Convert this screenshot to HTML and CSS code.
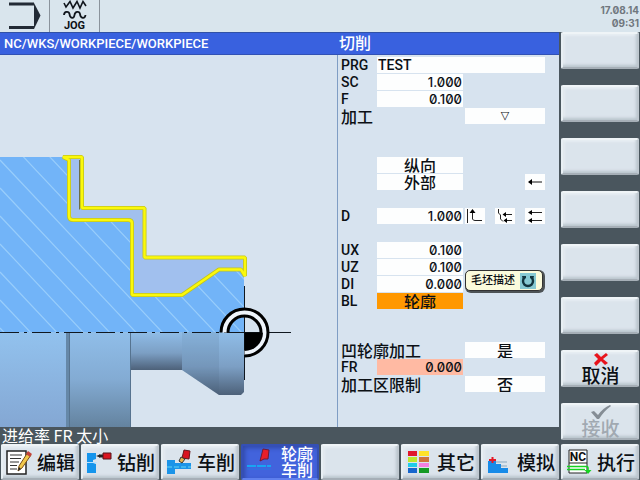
FILE: index.html
```html
<!DOCTYPE html>
<html lang="zh-CN">
<head>
<meta charset="utf-8">
<meta name="viewport" content="width=device-width, initial-scale=1">
<title>切削</title>
<link rel="stylesheet" href="styles.css">
</head>
<body>
<div class="hmi">
  <header class="top">
    <div class="mode">
      <svg width="34" height="32" viewBox="0 0 34 32" aria-hidden="true"><path d="M2 4H27M2 27.500H27" fill="none" stroke="#222a35" stroke-width="3"/><path d="M27 3L33.500 15.500L27 29Z" fill="#222a35"/></svg>
    </div>
    <div class="mode mode-jog">
      <svg width="24" height="20" viewBox="0 0 24 20" aria-hidden="true"><path d="M1 3L3 7L7 1.500L10 8L14 1.500L17 8L20 1.500L23 6" fill="none" stroke="#10151c" stroke-width="1.600"/><path d="M1 15C1 11 6 11 6.500 14C7 19 11 19 11.500 15C12 11 16.500 11 17 14C17.500 19 22 19 22.500 15" fill="none" stroke="#10151c" stroke-width="1.800"/></svg>
      <span>JOG</span>
    </div>
    <time class="clock" datetime="2014-08-17T09:31">17.08.14<br>09:31</time>
  </header>

  <div class="title path">NC/WKS/WORKPIECE/WORKPIECE</div>
  <h1 class="title">切削</h1>

  <main class="view">
    <svg class="drawing" viewBox="0 55 337 372" preserveAspectRatio="xMinYMin meet" role="img" aria-label="轮廓">
      <defs>
        <linearGradient id="g1" x2="0" y2="1"><stop offset="0" stop-color="#92c2ee"/><stop offset="1" stop-color="#84a7d3"/></linearGradient>
        <linearGradient id="g2" x2="0" y2="1"><stop offset="0" stop-color="#90bee9"/><stop offset=".5" stop-color="#83abd3"/><stop offset="1" stop-color="#64839f"/></linearGradient>
        <linearGradient id="g3" x2="0" y2="1"><stop offset="0" stop-color="#8fbde8"/><stop offset=".55" stop-color="#7c9fc4"/><stop offset="1" stop-color="#4d6179"/></linearGradient>
        <clipPath id="body"><path d="M0 157H66L69 160V217L72 220H129L132 223V295H182L219 270H241L244 276V332H0Z"/></clipPath>
      </defs>
      <path d="M0 157H66L69 160V217L72 220H129L132 223V295H182L219 270H241L244 276V332H0Z" fill="#72b4f8"/>
      <path clip-path="url(#body)" fill="none" stroke="#98cdfb" stroke-width="1.200" d="M0 -64L260 212M0 -36L260 240M0 -8L260 268M0 20L260 296M0 48L260 324M0 76L260 352M0 104L260 380M0 132L260 408M0 160L260 436M0 188L260 464M0 216L260 492M0 244L260 520M0 272L260 548M0 300L260 576M0 328L260 604"/>
      <g stroke-linejoin="bevel">
        <path d="M63 157H82V208H144.500V257.500H245V276L241 269.500H219L182 295H132V223Q132 220 128 220H73Q69 220 69 216V160Z" fill="#a1c0ee" stroke="#c4c51c" stroke-width="4"/>
        <path d="M63 157H82V208H144.500V257.500H245V276L241 269.500H219L182 295H132V223Q132 220 128 220H73Q69 220 69 216V160Z" fill="none" stroke="#fbf90b" stroke-width="2.400"/>
      </g>
      <path d="M79.500 160V209.500" stroke="#6d6f45"/>
      <rect y="332" width="67" height="95" fill="url(#g1)"/>
      <rect x="66" y="332" width="4" height="95" fill="#6688a8"/>
      <rect x="70" y="332" width="61" height="95" fill="url(#g2)"/>
      <path d="M69.500 332V427M130.500 332V427" stroke="#56738f"/>
      <rect x="131" y="332" width="52" height="38" fill="url(#g3)"/>
      <path d="M182 332H219V395L182 370Z" fill="url(#g3)"/>
      <path d="M182 332H219V395L182 370Z" fill="#455d76" opacity=".12"/>
      <path d="M219 332H244V392L241 395H219Z" fill="url(#g3)"/>
      <path d="M0 332.500H225" stroke="#101820" stroke-dasharray="19 5 3 5"/>
      <path d="M225 332.500H291M244.500 286V380" stroke="#101820"/>
      <path d="M224.500 332.500A20 20 0 1 1 244.500 352.500" fill="none" stroke="#eef4fb" stroke-width="5"/>
      <path d="M221 332.500A23.500 23.500 0 1 1 244.500 356" fill="none" stroke="#000" stroke-width="3"/>
      <path d="M228 332.500A16.500 16.500 0 0 1 261 332.500" fill="none" stroke="#000" stroke-width="3"/>
      <path d="M244.500 332.500H263A18.500 18.500 0 0 1 244.500 351Z" fill="#000"/>
    </svg>
  </main>

  <form class="params">
    <div class="group">
      <div class="row"><label for="prg">PRG</label><input class="wide" id="prg" value="TEST"></div>
      <div class="row"><label for="sc">SC</label><input class="num" id="sc" value="1.000"></div>
      <div class="row"><label for="f">F</label><input class="num" id="f" value="0.100"></div>
      <div class="row"><label class="long" for="mach">加工</label><select class="mark" id="mach"><option>▽</option></select></div>
    </div>
    <div class="group far">
      <div class="row"><select class="mid" aria-label="方向"><option>纵向</option></select></div>
      <div class="row"><select class="mid" aria-label="位置"><option>外部</option></select>
        <div class="icons end"><button type="button" aria-label="←"><svg width="20" height="16" viewBox="0 0 20 16"><path d="M4 8H17" stroke="#111"/><path d="M3 8L7 5V11Z"/></svg></button></div></div>
    </div>
    <div class="group">
      <div class="row"><label for="d">D</label><input class="num" id="d" value="1.000">
        <div class="icons">
          <button type="button" aria-label="↑"><svg width="20" height="16" viewBox="0 0 20 16"><path d="M2.500 1V15M7.500 2V11Q8 12.500 10 12.500H17" fill="none" stroke="#222"/><path d="M7.500 1L10.500 5H4.500Z"/></svg></button>
          <button type="button" aria-label="↰"><svg width="20" height="16" viewBox="0 0 20 16"><path d="M3.500 1V5L5.500 7V11L8 13.500M8 6.500H17M10 12.500H17" fill="none" stroke="#222"/><path d="M7.500 6.500L11 4V9ZM8.500 12.500L12 10V15Z"/></svg></button>
          <button type="button" aria-label="⇇"><svg width="20" height="16" viewBox="0 0 20 16"><path d="M4 4.500H17M4 12.500H17" fill="none" stroke="#222"/><path d="M3 4.500L7 2V7ZM3 12.500L7 10V15Z"/></svg></button>
        </div></div>
    </div>
    <div class="group">
      <div class="row"><label for="ux">UX</label><input class="num" id="ux" value="0.100"></div>
      <div class="row"><label for="uz">UZ</label><input class="num" id="uz" value="0.100"></div>
      <div class="row"><label for="di">DI</label><input class="num" id="di" value="0.000"></div>
      <div class="row"><label for="bl">BL</label><select class="mid active" id="bl"><option>轮廓</option></select>
        <div class="tip" role="tooltip">毛坯描述<svg width="16" height="16" viewBox="0 0 16 16" aria-hidden="true"><path d="M0 0H16V16H0Z" fill="#86c9d3"/><path d="M4.500 4.500A5 5 0 1 0 11.500 4.500" fill="none" stroke="#12353f" stroke-width="2.400"/><path d="M2 3H6V5L3 7ZM14 3H10V5L13 7Z" fill="#12353f"/></svg></div></div>
    </div>
    <div class="group far">
      <div class="row"><label class="long" for="relief">凹轮廓加工</label><select id="relief"><option>是</option></select></div>
      <div class="row"><label for="fr">FR</label><input class="num error" id="fr" value="0.000"></div>
      <div class="row"><label class="long" for="limit">加工区限制</label><select id="limit"><option>否</option></select></div>
    </div>
  </form>

  <div class="status" role="status">进给率 FR 太小</div>

  <nav class="side">
    <button class="key" type="button" aria-label="1"></button>
    <button class="key" type="button" aria-label="2"></button>
    <button class="key" type="button" aria-label="3"></button>
    <button class="key" type="button" aria-label="4"></button>
    <button class="key" type="button" aria-label="5"></button>
    <button class="key" type="button" aria-label="6"></button>
    <button class="key stack" type="button"><svg width="16" height="14" viewBox="0 0 16 14" aria-hidden="true"><path d="M1 3L4 1L8 5L13 1L15 3L10 7L15 11L12 13L8 9L3 14L1 11L5 7Z" fill="#e8141c"/></svg>取消</button>
    <button class="key stack" type="button" disabled><svg width="20" height="14" viewBox="0 0 20 14" aria-hidden="true"><path d="M0 7L3 6L7 10Q12 3 19 0L20 1Q13 6 8 14H6Z" fill="#858d95"/></svg>接收</button>
  </nav>

  <nav class="bottom">
    <button class="key" type="button"><svg width="26" height="26" viewBox="0 0 26 26" aria-hidden="true"><path d="M1 2H20V25H1Z" fill="#fff" stroke="#222" stroke-width="1.500"/><path d="M4 6H16M4 9.500H15M4 13H13M4 16.500H11M4 20H11" stroke="#333" stroke-width="1.200"/><path d="M12 22L13 17L22 3L25 6L16 19Z" fill="#f1c84b" stroke="#7b4f16"/><path d="M20 5L22 2L26 5L24 8Z" fill="#c3453c"/><path d="M12 22L13 18L15 20Z" fill="#222"/></svg><span>编辑</span></button>
    <button class="key" type="button"><svg width="26" height="26" viewBox="0 0 26 26" aria-hidden="true"><path d="M1 4H10V10L7 11V14L10 15V24H1Z" fill="#1595ec"/><path d="M1 13.500H11" stroke="#b9e2ff"/><path d="M10 7L14 5.500V8.500Z" fill="#222"/><path d="M13 7H18" stroke="#222" stroke-width="3"/><path d="M17 4H25V10H17Z" fill="#d91520" stroke="#54151b"/></svg><span>钻削</span></button>
    <button class="key" type="button"><svg width="26" height="26" viewBox="0 0 26 26" aria-hidden="true"><path d="M1 11H9V14H25V20H9V25H1Z" fill="#1b94e8"/><path d="M1 18H25" stroke="#65d6f2" stroke-dasharray="5 2"/><path d="M18 1L24 2L23 10L16 9Z" fill="#d91520" stroke="#6a171b"/><path d="M15 8L19 10L16 14L13 12Z" fill="#e8b34c" stroke="#333"/></svg><span>车削</span></button>
    <button class="key pressed" type="button" aria-pressed="true"><svg width="26" height="26" viewBox="0 0 26 26" aria-hidden="true"><path d="M17 1L23 2L22 11H18L14 13Z" fill="#e81e2a" stroke="#711a37"/><path d="M1 18H25" stroke="#18a4f3" stroke-width="2" stroke-dasharray="9 1"/><path d="M1 21H25" stroke="#2876e6"/></svg><span>轮廓<br>车削</span></button>
    <button class="key" type="button" aria-label="5"></button>
    <button class="key" type="button"><svg width="26" height="26" viewBox="0 0 26 26" aria-hidden="true"><path d="M2 2H11V7H2Z" fill="#e0182c"/><path d="M2 8H11V13H2Z" fill="#bde82c"/><path d="M2 14H11V18H2Z" fill="#20cce8"/><path d="M2 19H11V24H2Z" fill="#1766cd"/><path d="M13 2H23V7H13Z" fill="#ffe128"/><path d="M13 8H23V13H13Z" fill="#d0733b"/><path d="M13 14H23V18H13Z" fill="#f380e2"/><path d="M13 19H23V24H13Z" fill="#159a25"/></svg><span>其它</span></button>
    <button class="key" type="button"><svg width="26" height="26" viewBox="0 0 26 26" aria-hidden="true"><path d="M2 12H10V15H15V19H22V24H2Z" fill="#178be8"/><path d="M10 13H21M15 17H21" stroke="#87a7bd"/><path d="M6.500 8V14M3 11H10" stroke="#e61925" stroke-width="2"/></svg><span>模拟</span></button>
    <button class="key" type="button"><svg width="26" height="26" viewBox="0 0 26 26" aria-hidden="true"><path d="M3 1H21V24H3Z" fill="#fff" stroke="#222"/><text x="12" y="12" class="nc">NC</text><path d="M3 14H21" stroke="#222"/><path d="M1 17.500H20Q22 17.500 22 19V22M1 20.500H19" fill="none" stroke="#16d321" stroke-width="1.600"/><path d="M18.500 21H25.500L22 25Z" fill="#16d321"/></svg><span>执行</span></button>
  </nav>
</div>
</body>
</html>
```
FILE: styles.css
```css
* { box-sizing: border-box; }

:root {
  --panel: #d7e3ef;
  --dark: #4a565e;
  --blue: #3961df;
  --text: Roboto, "Noto Sans CJK SC", sans-serif;
  --digits: Inter, "Noto Sans CJK SC", sans-serif;
  --cjk: "Noto Sans CJK SC", sans-serif;
}

body {
  margin: 0;
  background: var(--dark);
  color: #0c1015;
  font: 500 14px/17px var(--text);
}

.hmi {
  display: grid;
  grid-template-columns: 1fr 222px 81px;
  grid-template-rows: 32px 23px 1fr 17px 36px;
  min-height: 100vh;
}

.top {
  grid-column: 1 / -1;
  display: flex;
  background: #d9e5ed;
}

.mode {
  width: 50px;
  display: flex;
  justify-content: flex-end;
  padding-right: 8px;
  border-right: 1px solid #8a939c;
}

.mode-jog {
  flex-direction: column;
  align-items: center;
  justify-content: flex-start;
  padding: 0;
  font-size: 11px;
  font-weight: bold;
  line-height: 12px;
}

.clock {
  margin-left: auto;
  padding: 4px 1px 0 0;
  color: #70777e;
  font: bold 10px/13px var(--digits);
  font-feature-settings: "zero";
  text-align: right;
}

.title {
  margin: 0;
  padding-left: 2px;
  background: var(--blue);
  border-top: 1px solid #3151a6;
  border-bottom: 1px solid #3151b4;
  color: #fff;
  font-size: 16px;
  font-weight: 500;
  line-height: 21px;
}

.path {
  padding-left: 4px;
  font-size: 13px;
}

.view {
  background: var(--panel);
  overflow: hidden;
}

.drawing {
  display: block;
  width: 100%;
  height: 100%;
}

.params {
  padding: 2px 14px 0 3px;
  background: var(--panel);
  border-left: 1px solid #7f9dc4;
}

.group + .group { margin-top: 17px; }
.group + .far { margin-top: 32px; }

.row {
  position: relative;
  display: grid;
  grid-template-columns: 34px 86px 1fr;
  column-gap: 2px;
  height: 17px;
  white-space: nowrap;
}

.row .long {
  grid-column: 1 / 3;
  font: 500 16px/16px var(--cjk);
}

.params input,
.params select {
  appearance: none;
  grid-column: 3;
  width: 100%;
  min-width: 0;
  height: 16px;
  margin: 0;
  padding: 0 1px;
  border: 0;
  border-radius: 0;
  background: #fdfefe;
  color: inherit;
  font: 500 16px/16px var(--cjk);
  text-align: center;
  text-align-last: center;
}

.params .num,
.params .mid { grid-column: 2; }

.params .num {
  font: 500 13px/16px var(--digits);
  font-feature-settings: "zero";
  text-align: right;
  text-align-last: right;
}

.params .wide {
  grid-column: 2 / 4;
  font: 500 14px/16px var(--text);
  text-align: left;
  text-align-last: left;
}

.params .mark { font: bold 11px/16px "DejaVu Sans", sans-serif; }
.params .active { background: #ff9800; }
.params .error { background: #ffbaa3; }

.icons {
  grid-column: 3;
  display: flex;
  justify-content: space-between;
}

.end { justify-content: flex-end; }

.icons button {
  height: 16px;
  padding: 0;
  border: 0;
  background: #fdfefe;
}

.icons svg { display: block; }

.tip {
  position: absolute;
  right: 2px;
  bottom: 19px;
  display: flex;
  align-items: center;
  gap: 5px;
  height: 21px;
  padding: 0 6px 0 5px;
  background: #fbfbdc;
  border: 1px solid #333;
  border-radius: 5px;
  box-shadow: 1px 1px 0 1px #4d5356;
  font-size: 11px;
}

.status {
  grid-column: 1 / 3;
  padding-left: 2px;
  color: #fff;
  font: 16px/16px var(--cjk);
}

.side {
  grid-column: 3;
  grid-row: 2 / 5;
  display: flex;
  flex-direction: column;
  gap: 16px;
  padding: 0 1px 0 2px;
}

.key {
  display: flex;
  align-items: center;
  justify-content: space-between;
  min-width: 0;
  height: 37px;
  padding: 0 2px 0 3px;
  background: #dbe4ec;
  border: 2px solid;
  border-color: #eff4f7 #bfc8d0 #a6afb7 #e8eff4;
  border-radius: 2px;
  box-shadow: inset -1px -2px 3px #b9c4cd, inset 1px 1px 3px #f0f5f8;
  color: #0c1015;
  font: 500 19px/18px var(--cjk);
  white-space: nowrap;
}

.key svg { flex: none; }

.stack {
  flex-direction: column;
  justify-content: flex-start;
}

.key:disabled { color: #a1a9b1; }

.bottom {
  grid-column: 1 / -1;
  display: grid;
  grid-template-columns: repeat(8, 1fr);
  gap: 2px;
  padding: 0 1px;
}

.bottom .key { height: 36px; }

.bottom .pressed {
  padding: 0 4px 2px 3px;
  background: #4263dc;
  border-color: #3550b4 #3550b4 #5f80ee #3550b4;
  box-shadow: inset 2px 2px 4px #3149a8;
  color: #fff;
  font-size: 16px;
  line-height: 16px;
}

.nc {
  fill: #111;
  font: bold 12px Roboto, sans-serif;
  text-anchor: middle;
}
```
